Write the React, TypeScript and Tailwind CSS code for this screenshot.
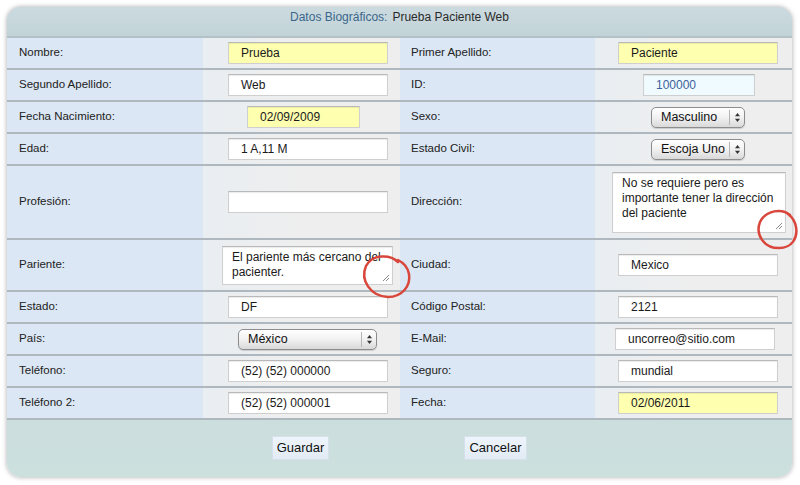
import React from "react";

const Input = ({
  value,
  w = "w-[160px]",
  bg = "bg-white",
  color = "text-[#1a1a1a]",
  ml = "ml-[25px]",
}: {
  value: string;
  w?: string;
  bg?: string;
  color?: string;
  ml?: string;
}) => (
  <div
    className={`${w} ${bg} ${ml} h-[22px] flex items-center pl-[12px] border border-[#cfcfcf] border-t-[#b9b9b9] shadow-[inset_0_1px_1px_rgba(0,0,0,0.08)] text-[12px] ${color} whitespace-nowrap`}
  >
    {value}
  </div>
);

const Arrows = () => (
  <svg width="7" height="11" viewBox="0 0 7 11">
    <path d="M3.5 1 L6 4.2 L1 4.2 Z" fill="#333" />
    <path d="M3.5 10 L6 6.8 L1 6.8 Z" fill="#333" />
  </svg>
);

const Select = ({ value, w, ml }: { value: string; w: string; ml: string }) => (
  <div
    className={`${w} ${ml} h-[21px] flex items-center rounded-[5px] border border-[#8d8d8d] bg-gradient-to-b from-[#ffffff] via-[#f1f1f1] to-[#d9d9d9] shadow-[0_1px_1px_rgba(0,0,0,0.15)]`}
  >
    <span className="flex-1 pl-[9px] text-[12.5px] text-[#111] whitespace-nowrap">{value}</span>
    <div className="w-[15px] h-[15px] border-l border-[#b5b5b5] flex items-center justify-center">
      <Arrows />
    </div>
  </div>
);

const Grip = () => (
  <svg className="absolute right-[2px] bottom-[2px]" width="9" height="9" viewBox="0 0 9 9">
    <path d="M8 2 L2 8 M8 5 L5 8" stroke="#8a8a8a" strokeWidth="1" />
  </svg>
);

const TextArea = ({
  lines,
  w,
  h,
  ml,
}: {
  lines: string[];
  w: string;
  h: string;
  ml: string;
}) => (
  <div
    className={`relative ${w} ${h} ${ml} bg-white border border-[#cfcfcf] border-t-[#b9b9b9] shadow-[inset_0_1px_1px_rgba(0,0,0,0.08)] pl-[9px] pt-[3px] text-[12px] leading-[15px] text-[#1a1a1a] overflow-hidden`}
  >
    {lines.map((l, i) => (
      <div key={i} className="whitespace-nowrap">
        {l}
      </div>
    ))}
    <Grip />
  </div>
);

const Row = ({
  l1,
  c1,
  l2,
  c2,
  h = "h-[32px]",
}: {
  l1: string;
  c1: React.ReactNode;
  l2: string;
  c2: React.ReactNode;
  h?: string;
}) => (
  <div className={`grid grid-cols-[196px_197px_195px_197px] ${h} border-b-2 border-[#aeb8be]`}>
    <div className="bg-[#dbe7f4] pl-[12px] flex items-center text-[11.5px] text-[#222]">{l1}</div>
    <div className="bg-[#eeeeee] flex items-center bg-gradient-to-r from-[#e9eef2] via-[#eeeeee] to-[#eeeeee]">{c1}</div>
    <div className="bg-[#dbe7f4] pl-[11px] flex items-center text-[11.5px] text-[#222]">{l2}</div>
    <div className="bg-[#eeeeee] flex items-center bg-gradient-to-r from-[#e9eef2] via-[#eeeeee] to-[#eeeeee]">{c2}</div>
  </div>
);

const Button = ({ label, w }: { label: string; w: string }) => (
  <div
    className={`${w} h-[24px] flex items-center justify-center bg-gradient-to-b from-[#eef4fb] to-[#e2ebf5] border border-[#d6e0ea] text-[13px] text-[#111]`}
  >
    {label}
  </div>
);

export default function App() {
  return (
    <div
      className="relative w-[800px] h-[485px] bg-white p-[7px]"
      style={{ fontFamily: '"Liberation Sans", Arial, sans-serif' }}
    >
      <div className="w-[785px] h-[470px] rounded-[14px] overflow-hidden flex flex-col shadow-[0_0_5px_rgba(0,0,0,0.35)] bg-gradient-to-b from-[#c4d4d8] to-[#cce0de]">
        <div className="h-[31px] shrink-0 flex items-center justify-center gap-[5px] text-[12px] bg-gradient-to-b from-[#cbdadf] to-[#c2d3d7] border-b-2 border-[#b4c1c6] pb-[9px]">
          <span className="text-[#3a678c]">Datos Biográficos:</span>
          <span className="text-[#2a2a2a]">Prueba Paciente Web</span>
        </div>
        <Row
          h="h-[32px]"
          l1="Nombre:"
          c1={<Input value="Prueba" bg="bg-[#ffffb0]" />}
          l2="Primer Apellido:"
          c2={<Input value="Paciente" bg="bg-[#ffffb0]" ml="ml-[23px]" />}
        />
        <Row
          l1="Segundo Apellido:"
          c1={<Input value="Web" />}
          l2="ID:"
          c2={
            <Input
              value="100000"
              w="w-[112px]"
              bg="bg-[#effbff]"
              color="text-[#3d5f9c]"
              ml="ml-[48px]"
            />
          }
        />
        <Row
          l1="Fecha Nacimiento:"
          c1={<Input value="02/09/2009" w="w-[113px]" bg="bg-[#ffffb0]" ml="ml-[44px]" />}
          l2="Sexo:"
          c2={<Select value="Masculino" w="w-[94px]" ml="ml-[56px]" />}
        />
        <Row
          l1="Edad:"
          c1={<Input value="1 A,11 M" />}
          l2="Estado Civil:"
          c2={<Select value="Escoja Uno" w="w-[94px]" ml="ml-[56px]" />}
        />
        <Row
          h="h-[74px]"
          l1="Profesión:"
          c1={<Input value="" />}
          l2="Dirección:"
          c2={
            <TextArea
              lines={["No se requiere pero es", "importante tener la dirección", "del paciente"]}
              w="w-[174px]"
              h="h-[61px]"
              ml="ml-[17px]"
            />
          }
        />
        <Row
          h="h-[52px]"
          l1="Pariente:"
          c1={
            <TextArea
              lines={["El pariente más cercano del", "pacienter."]}
              w="w-[171px]"
              h="h-[39px]"
              ml="ml-[19px]"
            />
          }
          l2="Ciudad:"
          c2={<Input value="Mexico" ml="ml-[23px]" />}
        />
        <Row
          l1="Estado:"
          c1={<Input value="DF" />}
          l2="Código Postal:"
          c2={<Input value="2121" ml="ml-[23px]" />}
        />
        <Row
          l1="País:"
          c1={<Select value="México" w="w-[139px]" ml="ml-[35px]" />}
          l2="E-Mail:"
          c2={<Input value="uncorreo@sitio.com" ml="ml-[20px]" />}
        />
        <Row
          l1="Teléfono:"
          c1={<Input value="(52) (52) 000000" />}
          l2="Seguro:"
          c2={<Input value="mundial" ml="ml-[23px]" />}
        />
        <Row
          l1="Teléfono 2:"
          c1={<Input value="(52) (52) 000001" />}
          l2="Fecha:"
          c2={<Input value="02/06/2011" bg="bg-[#ffffb0]" ml="ml-[23px]" />}
        />
        <div className="flex-1 flex items-center justify-center gap-[135px] pb-[2px]">
          <Button label="Guardar" w="w-[57px]" />
          <Button label="Cancelar" w="w-[63px]" />
        </div>
      </div>
      <svg className="absolute inset-0 pointer-events-none" width="800" height="485" viewBox="0 0 800 485">
        <path
          d="M398 262 C 390 254, 372 254, 366 266 C 360 280, 370 296, 388 297 C 402 297, 411 286, 409 274 C 408 268, 404 263, 398 260"
          fill="none"
          stroke="#d8463c"
          strokeWidth="2.5"
          strokeLinecap="round"
        />
        <path
          d="M790 215 C 782 208, 766 210, 760 222 C 755 235, 764 248, 779 248 C 792 248, 798 238, 796 227 C 795 221, 792 217, 788 214"
          fill="none"
          stroke="#d8463c"
          strokeWidth="2.5"
          strokeLinecap="round"
        />
      </svg>
    </div>
  );
}
